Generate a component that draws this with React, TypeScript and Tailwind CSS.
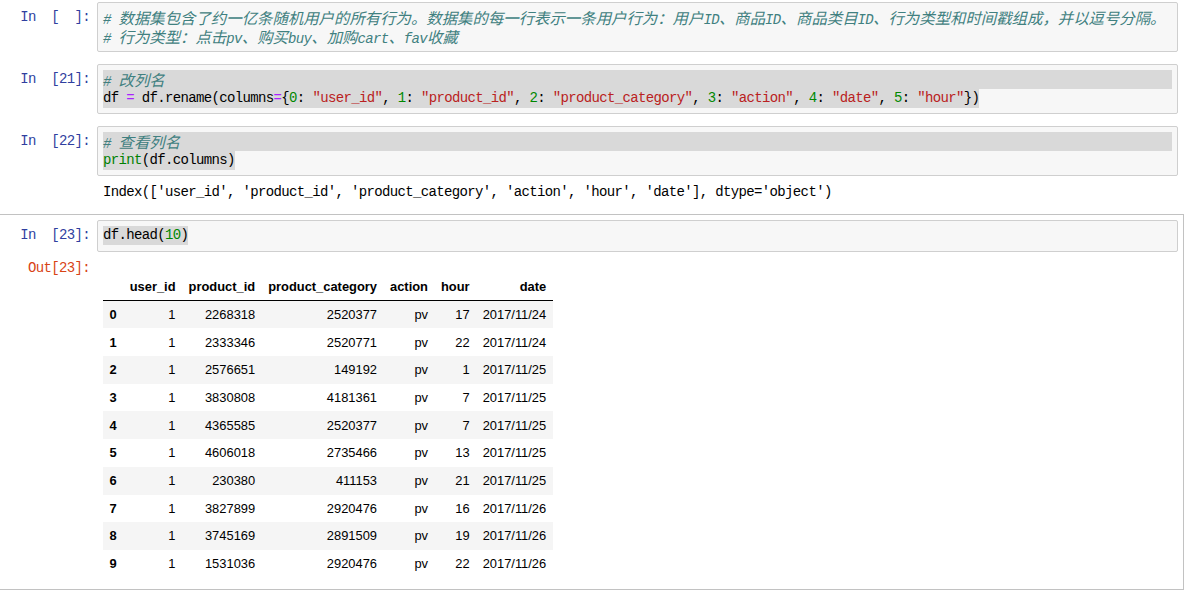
import type { ReactNode } from "react";

const rows = [
  ["0", "1", "2268318", "2520377", "pv", "17", "2017/11/24"],
  ["1", "1", "2333346", "2520771", "pv", "22", "2017/11/24"],
  ["2", "1", "2576651", "149192", "pv", "1", "2017/11/25"],
  ["3", "1", "3830808", "4181361", "pv", "7", "2017/11/25"],
  ["4", "1", "4365585", "2520377", "pv", "7", "2017/11/25"],
  ["5", "1", "4606018", "2735466", "pv", "13", "2017/11/25"],
  ["6", "1", "230380", "411153", "pv", "21", "2017/11/25"],
  ["7", "1", "3827899", "2920476", "pv", "16", "2017/11/26"],
  ["8", "1", "3745169", "2891509", "pv", "19", "2017/11/26"],
  ["9", "1", "1531036", "2920476", "pv", "22", "2017/11/26"],
];

const headers = ["user_id", "product_id", "product_category", "action", "hour", "date"];

// chinese runs are set wider, like the full-width glyphs of the original font
function C({ children }: { children: ReactNode }) {
  return (
    <span className="inline-block h-[19px] font-['Noto_Sans_CJK_SC',sans-serif] text-[15.4px] leading-[19px] tracking-normal">
      {children}
    </span>
  );
}

function Line({ children, hl }: { children: ReactNode; hl?: boolean }) {
  return (
    <div
      className={
        hl
          ? "h-[19px] leading-[19px] whitespace-pre bg-[#d9d9d9]"
          : "h-[19px] leading-[19px] whitespace-pre"
      }
    >
      {children}
    </div>
  );
}

function Sel({ children }: { children: ReactNode }) {
  return <span className="inline-block h-[19px] align-top bg-[#d9d9d9]">{children}</span>;
}

const Op = ({ children }: { children: ReactNode }) => (
  <span className="text-[#aa22ff]">{children}</span>
);
const Str = ({ children }: { children: ReactNode }) => (
  <span className="text-[#ba2121]">{children}</span>
);
const Num = ({ children }: { children: ReactNode }) => (
  <span className="text-[#008800]">{children}</span>
);
const Cm = ({ children }: { children: ReactNode }) => (
  <span className="italic text-[#408080]">{children}</span>
);

function Cell({
  prompt,
  selected,
  single,
  children,
  output,
}: {
  prompt: string;
  selected?: boolean;
  single?: boolean;
  children: ReactNode;
  output?: ReactNode;
}) {
  return (
    <div
      className={
        selected
          ? "w-[1184px] border-y border-r border-[#c2c2c2] py-[5px] pl-[6px] pr-[5px]"
          : "w-[1184px] border-y border-r border-transparent py-[5px] pl-[6px] pr-[5px]"
      }
    >
      <div className="flex">
        <div className="w-[91px] shrink-0 pt-[6px] pr-[7px] text-right leading-[19px] whitespace-pre text-[#303f9f]">
          {prompt}
        </div>
        <div
          className={
            single
              ? "flex-1 rounded-[2px] border border-[#cfcfcf] bg-[#f7f7f7] px-[5px] pt-[5px] pb-[6px]"
              : "flex-1 rounded-[2px] border border-[#cfcfcf] bg-[#f7f7f7] p-[5px]"
          }
        >
          {children}
        </div>
      </div>
      {output}
    </div>
  );
}

export default function App() {
  return (
    <div className="h-[590px] w-[1198px] overflow-hidden bg-white font-['Liberation_Mono',monospace] text-[14px] tracking-[-0.65px] text-black">
      <div className="-mt-[4px]">
        <Cell prompt="In  [  ]:">
          <Line>
            <Cm>
              # <C>数据集包含了约一亿条随机用户的所有行为。数据集的每一行表示一条用户行为：用户</C>ID
              <C>、商品</C>ID<C>、商品类目</C>ID<C>、行为类型和时间戳组成，并以逗号分隔。</C>
            </Cm>
          </Line>
          <Line>
            <Cm>
              # <C>行为类型：点击</C>pv<C>、购买</C>buy<C>、加购</C>cart<C>、</C>fav<C>收藏</C>
            </Cm>
          </Line>
        </Cell>

        <Cell prompt="In  [21]:">
          <Line hl>
            <Cm>
              # <C>改列名</C>
            </Cm>
          </Line>
          <Line>
            <Sel>
              df <Op>=</Op> df.rename(columns<Op>=</Op>{"{"}
              <Num>0</Num>: <Str>"user_id"</Str>, <Num>1</Num>: <Str>"product_id"</Str>,{" "}
              <Num>2</Num>: <Str>"product_category"</Str>, <Num>3</Num>: <Str>"action"</Str>,{" "}
              <Num>4</Num>: <Str>"date"</Str>, <Num>5</Num>: <Str>"hour"</Str>
              {"})"}
            </Sel>
          </Line>
        </Cell>

        <Cell
          prompt="In  [22]:"
          output={
            <div className="flex">
              <div className="w-[91px] shrink-0" />
              <div className="px-[6px] pt-[7px] pb-[6px] leading-[19px] whitespace-pre">
                Index(['user_id', 'product_id', 'product_category', 'action', 'hour', 'date'],
                dtype='object')
              </div>
            </div>
          }
        >
          <Line hl>
            <Cm>
              # <C>查看列名</C>
            </Cm>
          </Line>
          <Line>
            <Sel>
              <span className="text-[#008000]">print</span>(df.columns)
            </Sel>
          </Line>
        </Cell>

        <Cell
          prompt="In  [23]:"
          selected
          single
          output={
            <div className="flex">
              <div className="w-[91px] shrink-0 pt-[7px] pr-[7px] text-right leading-[19px] whitespace-pre text-[#d84315]">
                Out[23]:
              </div>
              <div className="p-[6px]">
                <table className="mt-[15px] border-collapse font-['Liberation_Sans',Arial,sans-serif] text-[12.9px] tracking-normal text-black">
                  <thead>
                    <tr>
                      <th className="h-[27.7px] border-b border-black px-[6.5px]" />
                      {headers.map((h) => (
                        <th
                          key={h}
                          className="h-[27.7px] border-b border-black px-[6.5px] text-right font-bold"
                        >
                          {h}
                        </th>
                      ))}
                    </tr>
                  </thead>
                  <tbody>
                    {rows.map((r, i) => (
                      <tr key={r[0]} className={i % 2 === 0 ? "bg-[#f5f5f5]" : "bg-white"}>
                        <th className="h-[27.7px] px-[6.5px] text-left font-bold">{r[0]}</th>
                        {r.slice(1).map((v, j) => (
                          <td key={j} className="h-[27.7px] px-[6.5px] text-right">
                            {v}
                          </td>
                        ))}
                      </tr>
                    ))}
                  </tbody>
                </table>
              </div>
            </div>
          }
        >
          <Line>
            <Sel>
              df.head(<Num>10</Num>)
            </Sel>
          </Line>
        </Cell>
      </div>
    </div>
  );
}
